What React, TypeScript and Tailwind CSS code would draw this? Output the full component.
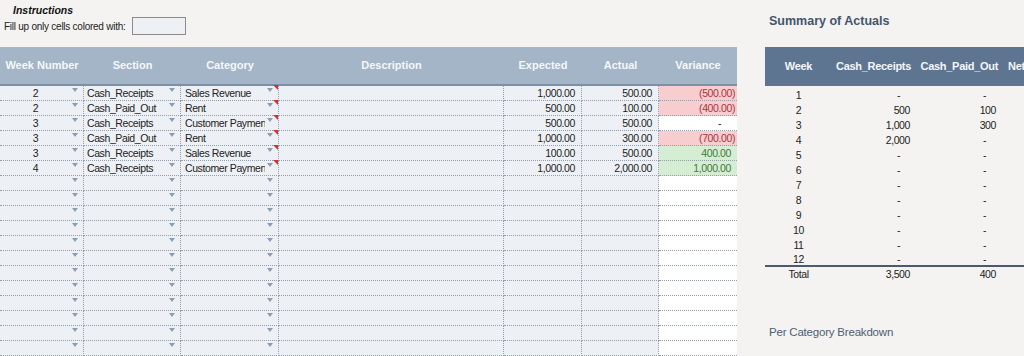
import React from "react";

type Tone = "neg" | "pos" | "zero";

interface EntryRow {
  week: string;
  section: string;
  category: string;
  expected: string;
  actual: string;
  variance: string;
  tone: Tone;
}

const entries: EntryRow[] = [
  { week: "2", section: "Cash_Receipts", category: "Sales Revenue", expected: "1,000.00", actual: "500.00", variance: "(500.00)", tone: "neg" },
  { week: "2", section: "Cash_Paid_Out", category: "Rent", expected: "500.00", actual: "100.00", variance: "(400.00)", tone: "neg" },
  { week: "3", section: "Cash_Receipts", category: "Customer Payment", expected: "500.00", actual: "500.00", variance: "-", tone: "zero" },
  { week: "3", section: "Cash_Paid_Out", category: "Rent", expected: "1,000.00", actual: "300.00", variance: "(700.00)", tone: "neg" },
  { week: "3", section: "Cash_Receipts", category: "Sales Revenue", expected: "100.00", actual: "500.00", variance: "400.00", tone: "pos" },
  { week: "4", section: "Cash_Receipts", category: "Customer Payment", expected: "1,000.00", actual: "2,000.00", variance: "1,000.00", tone: "pos" },
];

const BLANK_ROWS = 12;

const summary = [
  { week: "1", receipts: "-", paid: "-" },
  { week: "2", receipts: "500", paid: "100" },
  { week: "3", receipts: "1,000", paid: "300" },
  { week: "4", receipts: "2,000", paid: "-" },
  { week: "5", receipts: "-", paid: "-" },
  { week: "6", receipts: "-", paid: "-" },
  { week: "7", receipts: "-", paid: "-" },
  { week: "8", receipts: "-", paid: "-" },
  { week: "9", receipts: "-", paid: "-" },
  { week: "10", receipts: "-", paid: "-" },
  { week: "11", receipts: "-", paid: "-" },
  { week: "12", receipts: "-", paid: "-" },
];

const COLS = "grid grid-cols-[84px_97px_98px_225px_78px_77px_78px]";
const cell =
  "relative h-[15px] border-r border-b border-dotted border-[#939eab] text-[10.5px] tracking-[-0.4px] leading-[15px]";

function DropArrow() {
  return (
    <span className="absolute right-[5px] top-[2px] h-0 w-0 border-x-[3px] border-t-[4px] border-x-transparent border-t-[#8d9db0]" />
  );
}

function CommentMark() {
  return (
    <span className="absolute right-0 top-[-1px] h-0 w-0 border-l-[5px] border-t-[5px] border-l-transparent border-t-[#d2322d]" />
  );
}

function varianceClass(tone: Tone) {
  if (tone === "neg") return "bg-[#f8cdd0] text-[#a9333b] pr-[2px]";
  if (tone === "pos") return "bg-[#d5edd3] text-[#3f7a3a] pr-[6px]";
  return "bg-white text-[#222] pr-[16px]";
}

function EntryLine({ row }: { row?: EntryRow }) {
  return (
    <div className={COLS}>
      <div className={`${cell} bg-[#edf1f5] pr-[12px] text-center`}>
        {row?.week}
        <DropArrow />
      </div>
      <div className={`${cell} bg-[#edf1f5] pl-[3px]`}>
        {row?.section}
        <DropArrow />
      </div>
      <div className={`${cell} bg-[#edf1f5] pl-[4px]`}>
        <span className="block w-[80px] overflow-hidden whitespace-nowrap">{row?.category}</span>
        <DropArrow />
        {row && <CommentMark />}
      </div>
      <div className={`${cell} bg-[#edf1f5]`} />
      <div className={`${cell} bg-[#edf1f5] pr-[6px] text-right`}>{row?.expected}</div>
      <div className={`${cell} bg-[#edf1f5] pr-[6px] text-right`}>{row?.actual}</div>
      <div className={`${cell} border-r-0 text-right ${row ? varianceClass(row.tone) : "bg-white"}`}>
        {row?.variance}
      </div>
    </div>
  );
}

function EntryTable() {
  const headers = ["Week Number", "Section", "Category", "Description", "Expected", "Actual", "Variance"];
  return (
    <div className="w-[737px]">
      <div className={`${COLS} h-[39px] border-b-2 border-[#7d91a6] bg-[#a3b5c6]`}>
        {headers.map((h) => (
          <div key={h} className="flex items-center justify-center text-[11px] font-bold text-[#f5f7f9]">
            {h}
          </div>
        ))}
      </div>
      {entries.map((r, i) => (
        <EntryLine key={i} row={r} />
      ))}
      {Array.from({ length: BLANK_ROWS }, (_, i) => (
        <EntryLine key={`b${i}`} />
      ))}
    </div>
  );
}

function SummaryTable() {
  const grid = "grid grid-cols-[67px_84px_86px_1fr]";
  const data = "text-[10.5px] tracking-[-0.4px] text-[#222]";
  return (
    <div className="flex flex-col">
      <h2 className="h-[47px] pl-[4px] pt-[12px] text-[12.5px] font-bold text-[#43566d]">Summary of Actuals</h2>
      <div className={`${grid} h-[39px] items-center bg-[#5e7591] text-[11px] font-bold tracking-[-0.3px] text-[#f3f5f8]`}>
        <span className="text-center">Week</span>
        <span className="pr-[5px] text-right">Cash_Receipts</span>
        <span className="pr-[4px] text-right">Cash_Paid_Out</span>
        <span className="overflow-hidden whitespace-nowrap pl-[6px]">Net</span>
      </div>
      <div className={`pt-[2px] ${data}`}>
        {summary.map((s, i) => (
          <div
            key={s.week}
            className={`${grid} ${i === summary.length - 1 ? "h-[12px] leading-[12px]" : "h-[15px] leading-[15px]"}`}
          >
            <span className="text-center">{s.week}</span>
            <span className={`text-right ${s.receipts === "-" ? "pr-[16px]" : "pr-[6px]"}`}>{s.receipts}</span>
            <span className={`text-right ${s.paid === "-" ? "pr-[16px]" : "pr-[6px]"}`}>{s.paid}</span>
            <span />
          </div>
        ))}
      </div>
      <div className="h-[2px] bg-[#4b5b6f]" />
      <div className={`${grid} h-[15px] leading-[15px] ${data}`}>
        <span className="text-center">Total</span>
        <span className="pr-[6px] text-right">3,500</span>
        <span className="pr-[6px] text-right">400</span>
        <span />
      </div>
      <p className="pl-[4px] pt-[42px] text-[11.5px] tracking-[-0.2px] text-[#4d5e76]">Per Category Breakdown</p>
    </div>
  );
}

export default function App() {
  return (
    <div
      className="flex h-[356px] w-[1024px] overflow-hidden bg-[#f4f3f1] text-[11px] text-[#222]"
      style={{ fontFamily: '"Liberation Sans", Arial, sans-serif' }}
    >
      <div className="flex w-[737px] shrink-0 flex-col">
        <div className="h-[47px]">
          <p className="pl-[13px] pt-[4px] text-[10.5px] font-bold italic leading-[13px] text-[#111]">Instructions</p>
          <div className="flex items-center gap-[6px] pl-[4px]">
            <span className="text-[10px] tracking-[-0.25px] text-[#222]">Fill up only cells colored with:</span>
            <span className="h-[18px] w-[54px] border border-[#8b8b8b] bg-[#edf1f5]" />
          </div>
        </div>
        <EntryTable />
      </div>
      <div className="ml-[28px] flex-1">
        <SummaryTable />
      </div>
    </div>
  );
}
